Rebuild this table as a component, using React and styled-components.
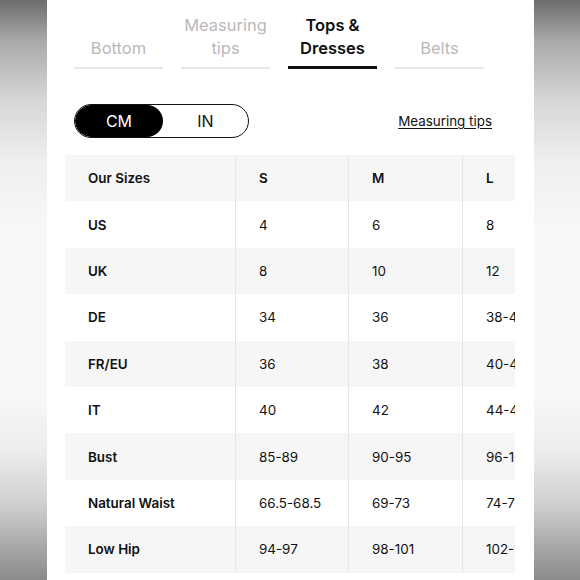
import React from "react";
import styled, { createGlobalStyle } from "styled-components";

const Global = createGlobalStyle`
  html, body { margin: 0; padding: 0; background: #fff; }
  body { font-family: Inter, "Noto Sans", Arial, sans-serif; color: #111; }
`;

const Page = styled.div`
  display: flex;
  width: 580px;
  height: 580px;
  overflow: hidden;
`;

const Side = styled.div`
  width: ${(p) => p.$w}px;
  flex-shrink: 0;
  background: linear-gradient(
    to bottom,
    #6c6c6c 0%,
    #a9a9a9 7%,
    #d6d6d6 17%,
    #efefef 28%,
    #f8f8f8 40%,
    #f8f8f8 68%,
    #ececec 78%,
    #cfcfcf 87%,
    #a4a4a4 95%,
    #8a8a8a 100%
  );
`;

const Main = styled.div`
  flex: 1;
  background: #fff;
  display: flex;
  flex-direction: column;
  min-width: 0;
`;

const Tabs = styled.div`
  display: flex;
  align-items: flex-end;
  gap: 18px;
  padding: 14px 0 0 27px;
`;

const Tab = styled.div`
  width: 89px;
  text-align: center;
  font-size: 16.5px;
  line-height: 23px;
  font-weight: ${(p) => (p.$active ? 600 : 400)};
  color: ${(p) => (p.$active ? "#111" : "#b9b9b9")};
  padding-bottom: ${(p) => (p.$active ? 6 : 7)}px;
  border-bottom: ${(p) => (p.$active ? "3px solid #111" : "2px solid #e8e8e8")};
`;

const Controls = styled.div`
  display: flex;
  align-items: center;
  justify-content: space-between;
  padding: 0 42px 0 27px;
  margin-top: 35px;
`;

const Toggle = styled.div`
  display: flex;
  width: 175px;
  height: 34px;
  box-sizing: border-box;
  border: 1.5px solid #111;
  border-radius: 17px;
  overflow: hidden;
`;

const Option = styled.div`
  flex: ${(p) => (p.$active ? "0 0 88px" : "1")};
  display: flex;
  align-items: center;
  justify-content: center;
  font-size: 16px;
  background: ${(p) => (p.$active ? "#000" : "transparent")};
  color: ${(p) => (p.$active ? "#fff" : "#111")};
  border-radius: 17px;
`;

const Link = styled.a`
  font-size: 13.4px;
  color: #111;
  text-decoration: underline;
  text-underline-offset: 2px;
`;

const TableWrap = styled.div`
  margin: 17px 0 0 18px;
  width: 450px;
  overflow: hidden;
`;

const Table = styled.div`
  display: grid;
  grid-template-columns: 170px 113px 114px 114px;
  width: 511px;
`;

const Cell = styled.div`
  height: 46.4px;
  display: flex;
  align-items: center;
  padding-left: 23px;
  box-sizing: border-box;
  font-size: 13.4px;
  white-space: nowrap;
  font-weight: ${(p) => (p.$bold ? 600 : 400)};
  background: ${(p) => (p.$shade ? "#f6f6f6" : "#fff")};
  border-left: ${(p) => (p.$first ? "none" : "1px solid #e6e6e6")};
`;

const header = ["Our Sizes", "S", "M", "L"];
const rows = [
  ["US", "4", "6", "8"],
  ["UK", "8", "10", "12"],
  ["DE", "34", "36", "38-40"],
  ["FR/EU", "36", "38", "40-42"],
  ["IT", "40", "42", "44-46"],
  ["Bust", "85-89", "90-95", "96-100"],
  ["Natural Waist", "66.5-68.5", "69-73", "74-79"],
  ["Low Hip", "94-97", "98-101", "102-106"],
];

export default function App() {
  return (
    <>
      <Global />
      <Page>
        <Side $w={47} />
        <Main>
          <Tabs>
            <Tab>Bottom</Tab>
            <Tab>
              Measuring
              <br />
              tips
            </Tab>
            <Tab $active>
              Tops &amp;
              <br />
              Dresses
            </Tab>
            <Tab>Belts</Tab>
          </Tabs>
          <Controls>
            <Toggle>
              <Option $active>CM</Option>
              <Option>IN</Option>
            </Toggle>
            <Link>Measuring tips</Link>
          </Controls>
          <TableWrap>
            <Table>
              {header.map((h, i) => (
                <Cell key={h} $bold $shade $first={i === 0}>
                  {h}
                </Cell>
              ))}
              {rows.map((r, ri) =>
                r.map((v, ci) => (
                  <Cell
                    key={ri + "-" + ci}
                    $bold={ci === 0}
                    $first={ci === 0}
                    $shade={ri % 2 === 1}
                  >
                    {v}
                  </Cell>
                ))
              )}
            </Table>
          </TableWrap>
        </Main>
        <Side $w={46} />
      </Page>
    </>
  );
}
